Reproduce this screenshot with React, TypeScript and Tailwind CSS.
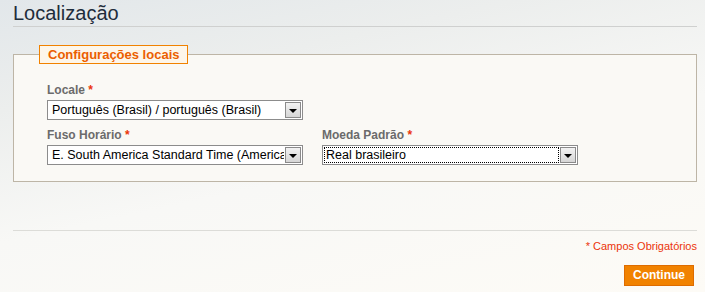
import React from "react";

function Label({ text }: { text: string }) {
  return (
    <div className="h-[15px] text-[12px] leading-[15px] font-bold text-[#6b6b6b]">
      {text} <span className="text-[#eb340a]">*</span>
    </div>
  );
}

function Select({
  value,
  focused = false,
}: {
  value: string;
  focused?: boolean;
}) {
  return (
    <div className="flex h-[20px] items-center border border-[#8c8c8c] bg-white">
      <div className="flex h-full flex-1 items-center overflow-hidden p-[1px]">
        <span
          className={
            focused
              ? "flex h-full w-full items-center overflow-hidden whitespace-nowrap pl-[2px] text-[12.5px] leading-[14px] text-black outline-1 outline-dotted outline-black -outline-offset-1"
              : "flex h-full w-full items-center overflow-hidden whitespace-nowrap pl-[3px] text-[12.5px] leading-[14px] text-black"
          }
        >
          {value}
        </span>
      </div>
      <span className="mr-[1px] flex h-[16px] w-[16px] shrink-0 items-center justify-center border border-[#8a8a8a] bg-[linear-gradient(#f2f2f2,#d6d6d6)]">
        <span className="mt-[2px] h-0 w-0 border-x-[4px] border-t-[4px] border-x-transparent border-t-black" />
      </span>
    </div>
  );
}

export default function App() {
  return (
    <div className="h-[292px] w-[705px] overflow-hidden bg-[linear-gradient(168deg,#e2e7ea_0%,#eceeed_25%,#f8f8f6_55%,#fdfbf6_100%)] pl-[13px] pr-[8px] font-['Liberation_Sans',Arial,sans-serif]">
      <div className="border-b border-[#cfd0cf] pb-[1px] pt-[1px]">
        <h1 className="text-[20px] leading-[24px] text-[#1e2d3b]">
          Localização
        </h1>
      </div>

      <fieldset className="mt-[18px] border border-[#bdb5a6] bg-[#faf9f5] p-0">
        <legend className="ml-[25px] border border-[#f18200] bg-[#fdf6ea] px-[8px] text-[13px] font-bold leading-[17px] text-[#eb5e00]">
          Configurações locais
        </legend>
        <div className="px-[33px] pb-[16px] pt-[19px]">
          <div className="w-[256px]">
            <Label text="Locale" />
            <div className="mt-[2px]">
              <Select value="Português (Brasil) / português (Brasil)" />
            </div>
          </div>
          <div className="mt-[8px] flex gap-[19px]">
            <div className="w-[256px]">
              <Label text="Fuso Horário" />
              <div className="mt-[2px]">
                <Select value="E. South America Standard Time (America/" />
              </div>
            </div>
            <div className="w-[256px]">
              <Label text="Moeda Padrão" />
              <div className="mt-[2px]">
                <Select value="Real brasileiro" focused />
              </div>
            </div>
          </div>
        </div>
      </fieldset>

      <div className="mt-[48px] border-t border-[#dcdcd8]" />

      <div className="mt-[8px] text-right text-[11px] leading-[14px] text-[#eb340a]">
        * Campos Obrigatórios
      </div>

      <div className="mt-[12px] flex justify-end pr-[3px]">
        <button className="h-[21px] w-[70px] border border-[#de6c00] bg-[#f18200] text-[12px] font-bold leading-[19px] text-white">
          Continue
        </button>
      </div>
    </div>
  );
}
